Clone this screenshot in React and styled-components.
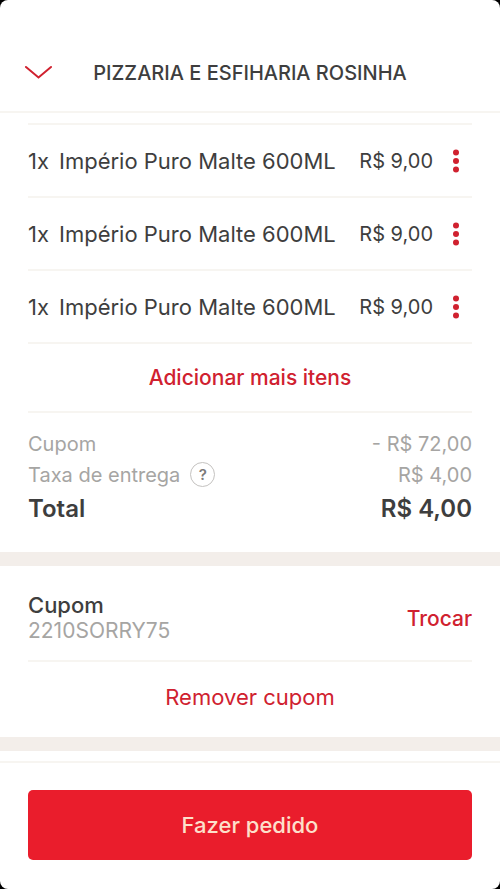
import React from 'react';
import styled, { createGlobalStyle } from 'styled-components';

const GlobalStyle = createGlobalStyle`
  * {
    box-sizing: border-box;
  }

  body {
    margin: 0;
    background: #000;
    font-family: Inter, 'Liberation Sans', sans-serif;
    color: #3e3e3e;
  }

  button {
    border: none;
    background: none;
    padding: 0;
    font-family: inherit;
    cursor: pointer;
  }
`;

const Page = styled.div`
  display: flex;
  flex-direction: column;
  min-height: 100vh;
  background: #fff;
  border-radius: 8px;
`;

const Header = styled.header`
  display: grid;
  grid-template-columns: 1fr auto 1fr;
  align-items: center;
  padding: 53px 24px 19px;
  border-bottom: 2px solid #f7f5f1;
`;

const BackButton = styled.button`
  display: flex;
  align-items: center;
  justify-self: start;
  height: 39px;
`;

const Title = styled.h1`
  margin: 0;
  font-size: 20px;
  font-weight: 500;
`;

const Main = styled.main`
  flex: 1;
`;

const Section = styled.section`
  padding: ${props => props.$padding};
`;

const Band = styled.div`
  height: 14px;
  background: #f3eeea;
`;

const ItemList = styled.ul`
  margin: 0;
  padding: 0;
  list-style: none;
  border-top: 2px solid #f7f5f1;
`;

const Item = styled.li`
  display: flex;
  align-items: center;
  height: 73px;
  border-bottom: 2px solid #f7f5f1;
  font-size: 22px;
`;

const Quantity = styled.span`
  width: 31px;
`;

const ItemName = styled.span`
  flex: 1;
  white-space: nowrap;
`;

const ItemPrice = styled.span`
  font-size: 20px;
  white-space: nowrap;
`;

const MenuButton = styled.button`
  display: flex;
  justify-content: center;
  width: 32px;
  margin-left: 7px;
`;

const LinkButton = styled.button`
  display: block;
  width: ${props => (props.$inline ? 'auto' : '100%')};
  height: ${props => (props.$inline ? 'auto' : '69px')};
  border-bottom: ${props => (props.$divider ? '2px solid #f7f5f1' : 'none')};
  color: #d0212f;
  font-size: ${props => (props.$light ? '22px' : '21px')};
  font-weight: ${props => (props.$light ? 400 : 500)};
`;

const SummaryRow = styled.div`
  display: flex;
  align-items: center;
  justify-content: space-between;
  height: ${props => (props.$total ? '37px' : '31px')};
  color: ${props => (props.$total ? '#3e3e3e' : '#a6a5a3')};
  font-size: ${props => (props.$total ? '24px' : '20px')};
  font-weight: ${props => (props.$total ? 600 : 400)};
`;

const SummaryLabel = styled.span`
  display: flex;
  align-items: center;
  gap: 10px;
`;

const HelpButton = styled.button`
  width: 25px;
  height: 25px;
  border: 1px solid #c4c2c0;
  border-radius: 50%;
  color: #7b7a79;
  font-size: 15px;
  font-weight: 600;
  line-height: 23px;
`;

const Coupon = styled.div`
  display: flex;
  align-items: center;
  justify-content: space-between;
  padding-bottom: 16px;
  border-bottom: 2px solid #f7f5f1;
`;

const CouponTitle = styled.h2`
  margin: 0;
  font-size: 22px;
  font-weight: 500;
  line-height: 26px;
`;

const CouponCode = styled.p`
  margin: 0;
  color: #a6a5a3;
  font-size: 21px;
  line-height: 26px;
`;

const Footer = styled.footer`
  padding: 27px 28px 29px;
  border-top: 2px solid #f7f5f1;
`;

const OrderButton = styled.button`
  width: 100%;
  height: 70px;
  border-radius: 5px;
  background: #ea1d2c;
  color: #fde0cb;
  font-size: 22px;
  font-weight: 500;
`;

const items = [
    { id: 1, quantity: 1, name: 'Império Puro Malte 600ML', price: 'R$ 9,00' },
    { id: 2, quantity: 1, name: 'Império Puro Malte 600ML', price: 'R$ 9,00' },
    { id: 3, quantity: 1, name: 'Império Puro Malte 600ML', price: 'R$ 9,00' },
];

const ChevronDown = () => (
    <svg width="28" height="16" viewBox="0 0 28 16" fill="none" aria-hidden="true">
        <path d="M2 2 14.5 12.5 27 2" stroke="#d0212f" strokeWidth="2" strokeLinecap="round" strokeLinejoin="miter" />
    </svg>
);

const Dots = () => (
    <svg width="6" height="24" viewBox="0 0 6 24" fill="#d0212f" aria-hidden="true">
        <circle cx="3" cy="3.5" r="3" />
        <circle cx="3" cy="12" r="3" />
        <circle cx="3" cy="20.5" r="3" />
    </svg>
);

const App = () => (
    <>
        <GlobalStyle />
        <Page>
            <Header>
                <BackButton type="button" aria-label="Fechar">
                    <ChevronDown />
                </BackButton>
                <Title>PIZZARIA E ESFIHARIA ROSINHA</Title>
            </Header>

            <Main>
                <Section $padding="10px 28px 0">
                    <ItemList>
                        {items.map(item => (
                            <Item key={item.id}>
                                <Quantity>{item.quantity}x</Quantity>
                                <ItemName>{item.name}</ItemName>
                                <ItemPrice>{item.price}</ItemPrice>
                                <MenuButton type="button" aria-label="Opções do item">
                                    <Dots />
                                </MenuButton>
                            </Item>
                        ))}
                    </ItemList>
                    <LinkButton type="button" $divider>Adicionar mais itens</LinkButton>
                </Section>

                <Section $padding="15px 28px 25px">
                    <SummaryRow>
                        <SummaryLabel>Cupom</SummaryLabel>
                        <span>- R$ 72,00</span>
                    </SummaryRow>
                    <SummaryRow>
                        <SummaryLabel>
                            Taxa de entrega
                            <HelpButton type="button">?</HelpButton>
                        </SummaryLabel>
                        <span>R$ 4,00</span>
                    </SummaryRow>
                    <SummaryRow $total>
                        <SummaryLabel>Total</SummaryLabel>
                        <span>R$ 4,00</span>
                    </SummaryRow>
                </Section>

                <Band />

                <Section $padding="26px 28px 6px">
                    <Coupon>
                        <div>
                            <CouponTitle>Cupom</CouponTitle>
                            <CouponCode>2210SORRY75</CouponCode>
                        </div>
                        <LinkButton type="button" $inline>Trocar</LinkButton>
                    </Coupon>
                    <LinkButton type="button" $light>Remover cupom</LinkButton>
                </Section>

                <Band />
            </Main>

            <Footer>
                <OrderButton type="button">Fazer pedido</OrderButton>
            </Footer>
        </Page>
    </>
);

export default App;
